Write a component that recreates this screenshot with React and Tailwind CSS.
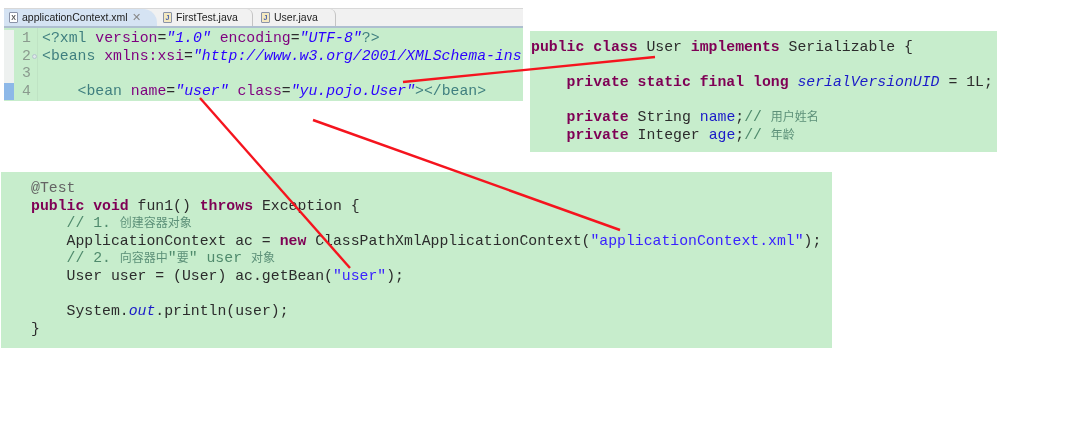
import React from "react";

const kw = "font-bold text-[#7f0055]";
const str = "text-[#3a22ff]";
const cmt = "text-[#4f8a6c]";
const cjk = "text-[12px] text-[#5c9078]";
const tag = "text-[#3f7f7f]";
const attr = "text-[#7f007f]";
const val = "italic text-[#2a00ff]";
const field = "text-[#1a1ac8]";

const mono = "font-['Liberation_Mono','Noto_Sans_CJK_SC',monospace] text-[14.8px] leading-[17.6px] whitespace-pre text-[#2c2c2c]";

const Line = ({ children }) => <div className="h-[17.6px]">{children}</div>;

const FileIcon = ({ letter, className }) => (
    <span className={"flex items-center justify-center w-[9px] h-[11px] border border-[#8a93a8] rounded-[1px] text-[7px] leading-none font-bold " + className}>{letter}</span>
);

const Tab = ({ letter, label, iconClass, children, className }) => (
    <div className={"flex items-center h-full gap-[4px] " + className}>
        <FileIcon letter={letter} className={iconClass} />
        <span>{label}</span>
        {children}
    </div>
);

const Editor = () => {
    const rows = [
        <><span className={tag}>&lt;?xml</span> <span className={attr}>version</span>=<span className={val}>"1.0"</span> <span className={attr}>encoding</span>=<span className={val}>"UTF-8"</span><span className={tag}>?&gt;</span></>,
        <><span className={tag}>&lt;beans</span> <span className={attr}>xmlns:xsi</span>=<span className={val}>"http://www.w3.org/2001/XMLSchema-ins</span></>,
        <> </>,
        <>    <span className={tag}>&lt;bean</span> <span className={attr}>name</span>=<span className={val}>"user"</span> <span className={attr}>class</span>=<span className={val}>"yu.pojo.User"</span><span className={tag}>&gt;&lt;/bean&gt;</span></>,
    ];
    return (
        <div className="w-[519px] mt-[8px] ml-[4px] shrink-0">
            <div className="flex items-center h-[18px] bg-[#f1f1f1] border-t border-[#d8d8d8] text-[10.5px] text-[#222] font-['Liberation_Sans',sans-serif]">
                <Tab letter="X" label="applicationContext.xml" iconClass="text-[#555] bg-white ml-[5px]" className="w-[153px] bg-[#d5e3f3] rounded-tr-[14px]">
                    <span className="text-[11px] leading-none text-[#888]">✕</span>
                </Tab>
                <Tab letter="J" label="FirstTest.java" iconClass="text-[#4a62a8] bg-[#f4e9c0] ml-[6px]" className="w-[96px] border-r border-[#c4c4c4] rounded-tr-[6px]" />
                <Tab letter="J" label="User.java" iconClass="text-[#4a62a8] bg-[#f4e9c0] ml-[8px]" className="w-[83px] border-r border-[#c4c4c4] rounded-tr-[6px]" />
            </div>
            <div className="h-[2px] bg-[#aebfd0]"></div>
            <div className="flex h-[73px] bg-[#c7edcc] overflow-hidden">
                <div className="w-[34px] flex flex-col shrink-0 pt-[2px] border-r border-[#bfe3c4]">
                    {rows.map((row, i) => (
                        <div key={i} className="flex items-center h-[17.6px]">
                            <div className={"w-[10px] h-full " + (i === 3 ? "bg-[#8db8e8]" : "bg-[#eef1f0]")}></div>
                            <div className={mono + " w-[17px] text-right text-[#8a9a8e]"}>{i + 1}</div>
                            {i === 1 && <div className="w-[5px] h-[5px] ml-[1px] rounded-full bg-[#dfe8ea] border border-[#b4c6cc]"></div>}
                        </div>
                    ))}
                </div>
                <div className={mono + " ml-[4px] pt-[2px]"}>
                    {rows.map((row, i) => <Line key={i}>{row}</Line>)}
                </div>
            </div>
        </div>
    );
};

const UserPanel = () => (
    <div className={mono + " w-[467px] h-[121px] ml-[7px] mt-[31px] shrink-0 bg-[#c7edcc] pt-[8px] pl-[1px]"}>
        <Line><span className={kw}>public class</span> User <span className={kw}>implements</span> Serializable {"{"}</Line>
        <Line> </Line>
        <Line>    <span className={kw}>private static final long</span> <span className="italic text-[#1a1ac8]">serialVersionUID</span> = 1L;</Line>
        <Line> </Line>
        <Line>    <span className={kw}>private</span> String <span className={field}>name</span>;<span className={cmt}>// </span><span className={cjk}>用户姓名</span></Line>
        <Line>    <span className={kw}>private</span> Integer <span className={field}>age</span>;<span className={cmt}>// </span><span className={cjk}>年龄</span></Line>
    </div>
);

const TestPanel = () => (
    <div className={mono + " w-[831px] h-[176px] ml-[1px] mt-[20px] bg-[#c7edcc] pt-[8px] pl-[30px]"}>
        <Line><span className="text-[#646464]">@Test</span></Line>
        <Line><span className={kw}>public void</span> fun1() <span className={kw}>throws</span> Exception {"{"}</Line>
        <Line>    <span className={cmt}>// 1. </span><span className={cjk}>创建容器对象</span></Line>
        <Line>    ApplicationContext ac = <span className={kw}>new</span> ClassPathXmlApplicationContext(<span className={str}>"applicationContext.xml"</span>);</Line>
        <Line>    <span className={cmt}>// 2. </span><span className={cjk}>向容器中</span><span className={cmt}>"</span><span className={cjk}>要</span><span className={cmt}>" user </span><span className={cjk}>对象</span></Line>
        <Line>    User user = (User) ac.getBean(<span className={str}>"user"</span>);</Line>
        <Line> </Line>
        <Line>    System.<span className="italic text-[#1a1ac8]">out</span>.println(user);</Line>
        <Line>{"}"}</Line>
    </div>
);

const App = () => {
    return (
        <div className="relative w-[1080px] h-[424px] bg-white overflow-hidden">
            <div className="blur-[0.35px]">
                <div className="flex items-start">
                    <Editor />
                    <UserPanel />
                </div>
                <TestPanel />
            </div>
            {/* arrows drawn over the screenshots */}
            <svg className="absolute inset-0" width="1080" height="424" fill="none" stroke="#f5141e" strokeWidth="2.4">
                <path d="M403 82L655 57" />
                <path d="M200 98L350 268" />
                <path d="M313 120L620 230" />
            </svg>
        </div>
    );
};

export default App;
